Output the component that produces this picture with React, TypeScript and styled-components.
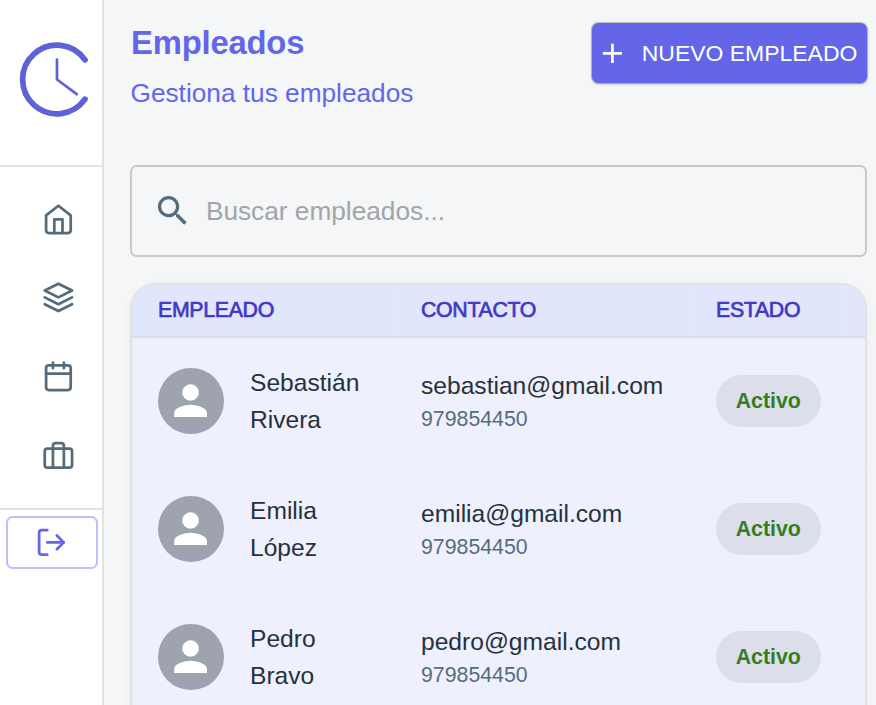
import React from "react";
import styled, { createGlobalStyle } from "styled-components";

const c = {
  primary: "#6366e8",
  primaryDark: "#4338c4",
  page: "#f4f6f8",
  line: "#e2e2e2",
  slate: "#566d79",
  text: "#263238",
};

const GlobalStyle = createGlobalStyle`
  *, *::before, *::after { box-sizing: border-box; }
  body {
    margin: 0;
    overflow: hidden;
    background: ${c.page};
    color: ${c.text};
    font-family: "Liberation Sans", Arial, sans-serif;
    -webkit-font-smoothing: antialiased;
  }
  h1, p { margin: 0; }
  button, input { font: inherit; }
`;

const Layout = styled.div`
  display: flex;
  height: 100vh;
  overflow: hidden;
`;

const Sidebar = styled.aside`
  flex: 0 0 104px;
  background: #fff;
  border-right: 2px solid ${c.line};
`;

const LogoBox = styled.div`
  height: 167px;
  padding: 40px 0 0 18px;
  border-bottom: 2px solid ${c.line};
`;

const Nav = styled.nav`
  height: 343px;
  padding: 12.5px 0;
  border-bottom: 2px solid ${c.line};
`;

const NavItem = styled.a`
  display: flex;
  align-items: center;
  justify-content: center;
  height: 78.8px;
  padding-left: 14px;
  color: ${c.slate};
`;

const LogoutButton = styled.button`
  display: flex;
  align-items: center;
  justify-content: center;
  width: 92px;
  height: 53px;
  margin: 6px 0 0 5.5px;
  padding: 0;
  background: transparent;
  border: 2px solid #bfc0f6;
  border-radius: 6.5px;
  color: ${c.primary};
`;

const Main = styled.main`
  flex: 1;
  min-width: 0;
  padding: 23px 9px 0 26px;
`;

const Header = styled.header`
  display: flex;
  justify-content: space-between;
  align-items: flex-start;
  height: 142px;
  padding-left: 0.5px;
`;

const Title = styled.h1`
  font-size: 32.8px;
  line-height: 40px;
  font-weight: 700;
  letter-spacing: -0.2px;
  padding-left: 0.5px;
  color: ${c.primary};
`;

const Subtitle = styled.p`
  margin-top: 10px;
  font-size: 26.24px;
  line-height: 40px;
  color: ${c.primary};
`;

const AddButton = styled.button`
  display: flex;
  align-items: center;
  gap: 13px;
  width: 275px;
  height: 60px;
  padding: 0 0 0 4px;
  border: 0;
  border-radius: 6.5px;
  background: ${c.primary};
  color: #fff;
  font-size: 22.96px;
  white-space: nowrap;
  box-shadow: 0 0 0 1px rgba(0, 0, 0, 0.2), 0 1px 3px rgba(0, 0, 0, 0.25);
`;

const SearchField = styled.label`
  display: flex;
  align-items: center;
  gap: 13.5px;
  height: 92px;
  padding: 0 21px;
  border: 2px solid #c9cacc;
  border-radius: 6.5px;
  color: ${c.slate};
`;

const SearchInput = styled.input`
  flex: 1;
  min-width: 0;
  padding: 0;
  border: 0;
  outline: 0;
  background: transparent;
  font-size: 26.24px;
  &::placeholder { color: #a1a5a8; opacity: 1; }
`;

const Card = styled.section`
  height: 460px;
  margin-top: 26px;
  overflow: hidden;
  border: 2px solid ${c.line};
  border-radius: 26px;
  background: #eef0fe;
  box-shadow: 0 2px 10px rgba(0, 0, 0, 0.05);
`;

const Row = styled.div`
  display: grid;
  grid-template-columns: 262px 295px 156px 1fr;
  align-items: center;
  height: 128px;
  border-bottom: 2px solid #efeff2;
`;

const HeadRow = styled(Row)`
  align-items: stretch;
  height: 53px;
  background: #e0e6fc;
  border-bottom-color: #dddfe3;
`;

const HeadCell = styled.div`
  padding-left: 26px;
  line-height: 51px;
  font-size: 21.3px;
  letter-spacing: -0.3px;
  color: ${c.primaryDark};
  -webkit-text-stroke: 0.7px ${c.primaryDark};
  & + & { border-left: 1px solid #e2e8fc; }
`;

const Cell = styled.div`
  padding-left: 27px;
`;

const Person = styled(Cell)`
  display: flex;
  align-items: center;
  gap: 26.4px;
  padding-left: 26px;
  padding-right: 26px;
`;

const Avatar = styled.span`
  display: flex;
  flex: 0 0 65.6px;
  height: 65.6px;
  align-items: center;
  justify-content: center;
  border-radius: 50%;
  background: #9fa3af;
  color: #fff;
`;

const Name = styled.p`
  width: 118px;
  font-size: 24.6px;
  line-height: 37px;
`;

const Email = styled.p`
  font-size: 24.6px;
  line-height: 37px;
`;

const Phone = styled.p`
  font-size: 21.32px;
  line-height: 31px;
  color: ${c.slate};
`;

const Chip = styled.span`
  display: flex;
  align-items: center;
  justify-content: center;
  width: 104.5px;
  height: 52.5px;
  border-radius: 26px;
  background: #dcdee9;
  color: #357e22;
  font-size: 21.32px;
  font-weight: 700;
`;

const Stroke = ({ children }: { children: React.ReactNode }) => (
  <svg width="32.8" height="32.8" viewBox="0 0 24 24" fill="none" stroke="currentColor" strokeWidth="2" strokeLinecap="round" strokeLinejoin="round">
    {children}
  </svg>
);

const Solid = ({ size, d }: { size: number; d: string }) => (
  <svg width={size} height={size} viewBox="0 0 24 24" fill="currentColor">
    <path d={d} />
  </svg>
);

const paths = {
  add: "M19 13h-6v6h-2v-6H5v-2h6V5h2v6h6v2z",
  search:
    "M15.5 14h-.79l-.28-.27C15.41 12.59 16 11.11 16 9.5 16 5.91 13.09 3 9.5 3S3 5.91 3 9.5 5.91 16 9.5 16c1.61 0 3.09-.59 4.23-1.57l.27.28v.79l5 4.99L20.49 19l-4.99-5zm-6 0C7.01 14 5 11.99 5 9.5S7.01 5 9.5 5 14 7.01 14 9.5 11.99 14 9.5 14z",
  person:
    "M12 12c2.21 0 4-1.79 4-4s-1.79-4-4-4-4 1.79-4 4 1.79 4 4 4zm0 2c-2.67 0-8 1.34-8 4v2h16v-2c0-2.66-5.33-4-8-4z",
};

const navIcons = [
  {
    label: "Inicio",
    icon: (
      <>
        <path d="M3 9l9-7 9 7v11a2 2 0 0 1-2 2H5a2 2 0 0 1-2-2z" />
        <polyline points="9 22 9 12 15 12 15 22" />
      </>
    ),
  },
  {
    label: "Servicios",
    icon: (
      <>
        <polygon points="12 2 2 7 12 12 22 7 12 2" />
        <polyline points="2 17 12 22 22 17" />
        <polyline points="2 12 12 17 22 12" />
      </>
    ),
  },
  {
    label: "Calendario",
    icon: (
      <>
        <rect x="3" y="4" width="18" height="18" rx="2" />
        <path d="M16 2v4M8 2v4M3 10h18" />
      </>
    ),
  },
  {
    label: "Negocio",
    icon: (
      <>
        <rect x="2" y="7" width="20" height="14" rx="2" />
        <path d="M16 21V5a2 2 0 0 0-2-2h-4a2 2 0 0 0-2 2v16" />
      </>
    ),
  },
];

const employees = [
  { name: "Sebastián Rivera", email: "sebastian@gmail.com", phone: "979854450" },
  { name: "Emilia López", email: "emilia@gmail.com", phone: "979854450" },
  { name: "Pedro Bravo", email: "pedro@gmail.com", phone: "979854450" },
];

export default function App() {
  return (
    <>
      <GlobalStyle />
      <Layout>
        <Sidebar>
          <LogoBox>
            <svg width="78" height="80" viewBox="0 0 78 80" fill="none" stroke="#5e62d7" strokeLinecap="round" strokeLinejoin="round">
              <path d="M67 19.8A34.3 34.3 0 1 0 67 59.2" strokeWidth="5.7" />
              <path d="M39 19.5V39.5L58.7 54.2" strokeWidth="2.7" />
            </svg>
          </LogoBox>
          <Nav>
            {navIcons.map((n) => (
              <NavItem key={n.label} aria-label={n.label}>
                <Stroke>{n.icon}</Stroke>
              </NavItem>
            ))}
          </Nav>
          <LogoutButton aria-label="Salir">
            <Stroke>
              <path d="M9 21H5a2 2 0 0 1-2-2V5a2 2 0 0 1 2-2h4" />
              <polyline points="16 17 21 12 16 7" />
              <line x1="21" y1="12" x2="9" y2="12" />
            </Stroke>
          </LogoutButton>
        </Sidebar>
        <Main>
          <Header>
            <div>
              <Title>Empleados</Title>
              <Subtitle>Gestiona tus empleados</Subtitle>
            </div>
            <AddButton>
              <Solid size={32.8} d={paths.add} />
              NUEVO EMPLEADO
            </AddButton>
          </Header>
          <SearchField>
            <Solid size={39.4} d={paths.search} />
            <SearchInput placeholder="Buscar empleados..." />
          </SearchField>
          <Card>
            <HeadRow>
              <HeadCell>EMPLEADO</HeadCell>
              <HeadCell>CONTACTO</HeadCell>
              <HeadCell>ESTADO</HeadCell>
              <HeadCell />
            </HeadRow>
            {employees.map((e) => (
              <Row key={e.email}>
                <Person>
                  <Avatar>
                    <Solid size={49.2} d={paths.person} />
                  </Avatar>
                  <Name>{e.name}</Name>
                </Person>
                <Cell>
                  <Email>{e.email}</Email>
                  <Phone>{e.phone}</Phone>
                </Cell>
                <Cell>
                  <Chip>Activo</Chip>
                </Cell>
              </Row>
            ))}
          </Card>
        </Main>
      </Layout>
    </>
  );
}
